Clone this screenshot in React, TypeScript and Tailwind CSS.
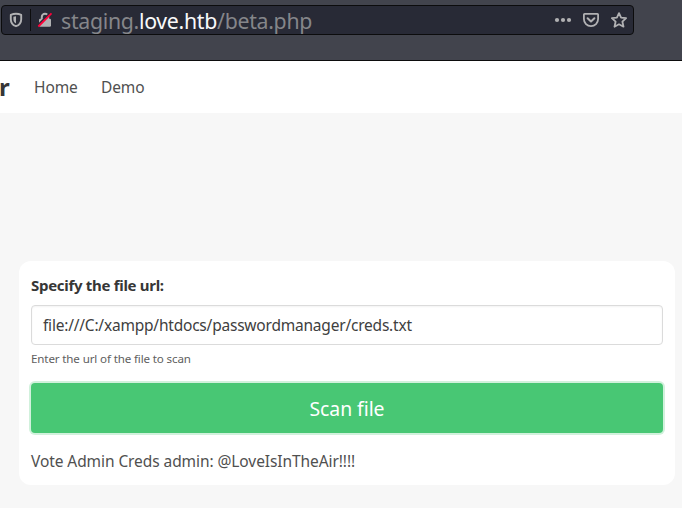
function ShieldIcon() {
  return (
    <svg className="ml-[6px] h-4 w-4 shrink-0" viewBox="0 0 16 16" fill="none">
      <path d="M8 1.8c1.8 0 3.6.4 5.2 1.1v4.3c0 3.5-2.1 6-5.2 7-3.1-1-5.2-3.5-5.2-7V2.9C4.4 2.2 6.2 1.8 8 1.8z" stroke="#b1b1b3" strokeWidth="1.9" strokeLinejoin="round" />
      <path d="M8 4.2v7.3C6.2 10.5 5.4 9 5.4 7V4.7C6.2 4.4 7.1 4.2 8 4.2z" fill="#b1b1b3" />
    </svg>
  );
}

function InsecureLockIcon() {
  return (
    <svg className="ml-1.5 h-4 w-4 shrink-0" viewBox="0 0 16 16" fill="none">
      <path d="M4.8 7V5a3.2 3.2 0 0 1 6.4 0v2" stroke="#b1b1b3" strokeWidth="2" />
      <rect x="2" y="6.8" width="12" height="8" rx="1.3" fill="#b1b1b3" />
      <path d="M.9 13.2 13.2.9" stroke="#282a36" strokeWidth="2" />
      <path d="M1.3 14.5 14.5 1.3" stroke="#ff0039" strokeWidth="1.8" />
    </svg>
  );
}

function AddressBar() {
  return (
    <div className="ml-px flex h-[30px] w-[633px] items-center rounded-[4px] border border-[#0c0c0d] bg-[#282a36]">
      <ShieldIcon />
      <div className="ml-1.5 h-[22px] w-px shrink-0 bg-[#0c0c0d]" />
      <InsecureLockIcon />
      <div className="ml-2 flex-1 whitespace-nowrap pt-px text-[21.3px] leading-7 tracking-[-0.3px] text-[#85868a]">
        staging.<span className="text-[#f9f9fa]">love.htb</span>/beta.php
      </div>
      <svg className="h-4 w-[18px] shrink-0" viewBox="0 0 18 16" fill="#b1b1b3">
        <circle cx="3" cy="8" r="2.1" />
        <circle cx="9" cy="8" r="2.1" />
        <circle cx="15" cy="8" r="2.1" />
      </svg>
      <svg className="ml-[11px] h-4 w-4 shrink-0" viewBox="0 0 16 16" fill="none" stroke="#b1b1b3" strokeWidth="1.8" strokeLinecap="round" strokeLinejoin="round">
        <path d="M1.6 1.8h12.8c.4 0 .7.3.7.7V7a7.1 7.1 0 0 1-14.2 0V2.5c0-.4.3-.7.7-.7z" />
        <path d="M4.6 6.2 8 9.5l3.4-3.3" strokeWidth="2" />
      </svg>
      <svg className="ml-3 mr-[6px] h-4 w-4 shrink-0" viewBox="0 0 16 16" fill="none" stroke="#b1b1b3" strokeWidth="1.8" strokeLinejoin="round">
        <path d="M8 1.1l2.1 4.6 5 .5-3.7 3.5 1.1 5L8 12.3l-4.5 2.4 1.1-5L.9 6.2l5-.5z" />
      </svg>
    </div>
  );
}

export default function App() {
  return (
    <div className="flex h-[508px] w-[682px] flex-col overflow-hidden bg-[#f7f7f7] font-['Noto_Sans',sans-serif] text-[15.5px] text-[#505050]">
      <header className="h-[61px] shrink-0 border-b border-[#0c0c0d] bg-[#42444d] pt-[5px]">
        <AddressBar />
      </header>
      <nav className="flex h-[52px] shrink-0 items-center bg-white leading-6">
        <span className="-ml-px w-[35px] text-2xl font-bold text-[#363636]">r</span>
        <a className="w-[67px] tracking-[-0.1px]">Home</a>
        <a className="tracking-[-0.1px]">Demo</a>
      </nav>
      <main className="ml-[19px] mt-[148px] flex h-[224px] w-[656px] flex-col rounded-xl bg-white p-3">
        <label className="h-8 text-[15px] font-bold leading-6 tracking-[-0.3px] text-[#363636]">
          <span>Specify the file url:</span>
        </label>
        <div className="flex h-10 shrink-0 items-center rounded border border-[#dbdbdb] bg-white px-[11px] pt-0.5 tracking-[-0.21px] text-[#404040] shadow-[inset_0_1px_2px_rgba(10,10,10,0.05)]">
          <span>file:///C:/xampp/htdocs/passwordmanager/creds.txt</span>
        </div>
        <p className="mt-[5px] text-[11.6px] leading-[18px] tracking-[-0.14px] text-[#606060]">
          <span>Enter the url of the file to scan</span>
        </p>
        <button className="mt-[15px] flex h-[50px] w-full shrink-0 items-center justify-center rounded bg-[#48c774] pt-0.5 text-[19.4px] tracking-[-0.05px] text-white shadow-[0_0_0_2px_rgba(72,199,116,0.25)]">
          <span>Scan file</span>
        </button>
        <p className="mt-4 leading-6 tracking-[-0.08px]">
          <span>Vote Admin Creds admin: @LoveIsInTheAir!!!!</span>
        </p>
      </main>
    </div>
  );
}
